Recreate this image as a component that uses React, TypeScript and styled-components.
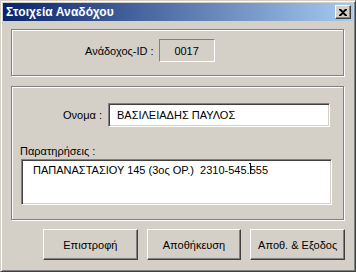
import React from "react";
import styled, { createGlobalStyle } from "styled-components";

const GlobalStyle = createGlobalStyle`
  body {
    margin: 0;
    background: #d4d0c8;
    font-family: "Liberation Sans", Arial, sans-serif;
    font-size: 11px;
    color: #000;
  }
`;

const Window = styled.div`
  width: 356px;
  height: 272px;
  box-sizing: border-box;
  background: #d4d0c8;
  border: 1px solid;
  border-color: #d4d0c8 #404040 #404040 #d4d0c8;
  box-shadow: inset 1px 1px #fff, inset -1px -1px #808080;
  padding: 2px;
  display: flex;
  flex-direction: column;
`;

const TitleBar = styled.div`
  height: 18px;
  flex: none;
  background: linear-gradient(to right, #0a246a, #a6caf0);
  display: flex;
  align-items: center;
  justify-content: space-between;
  padding: 0 2px 0 3px;
`;

const Title = styled.span`
  color: #fff;
  font-weight: bold;
  font-size: 12px;
  letter-spacing: 0.1px;
`;

const CloseButton = styled.div`
  width: 16px;
  height: 14px;
  box-sizing: border-box;
  background: #d4d0c8;
  border: 1px solid;
  border-color: #fff #404040 #404040 #fff;
  box-shadow: inset -1px -1px #808080;
  display: flex;
  align-items: center;
  justify-content: center;
`;

const Body = styled.div`
  flex: 1;
  display: flex;
  flex-direction: column;
  padding: 8px 8px 0 8px;
`;

const Group = styled.div<{ $h: number; $mt: number }>`
  height: ${(p) => p.$h}px;
  margin-top: ${(p) => p.$mt}px;
  width: 333px;
  box-sizing: border-box;
  border: 1px solid #808080;
  box-shadow: inset 1px 1px #fff, 1px 1px #fff;
  position: relative;
`;

const IdRow = styled.div`
  display: flex;
  align-items: center;
  padding: 9px 0 0 73px;
  gap: 5px;
`;

const Label = styled.span`
  white-space: nowrap;
`;

const IdBox = styled.div`
  width: 56px;
  height: 23px;
  box-sizing: border-box;
  border: 1px solid;
  border-color: #808080 #fff #fff #808080;
  display: flex;
  align-items: center;
  justify-content: center;
`;

const NameRow = styled.div`
  display: flex;
  align-items: center;
  padding: 16px 0 0 51px;
  gap: 6px;
`;

const Field = styled.div<{ $w: number; $h: number }>`
  width: ${(p) => p.$w}px;
  height: ${(p) => p.$h}px;
  box-sizing: border-box;
  background: #fff;
  border: 1px solid;
  border-color: #808080 #fff #fff #808080;
  box-shadow: inset 1px 1px #404040, inset -1px -1px #d4d0c8;
  padding: 0 8px;
  white-space: pre;
`;

const NameField = styled(Field)`
  display: flex;
  align-items: center;
`;

const NotesField = styled(Field)`
  padding-top: 4px;
  padding-left: 11px;
  position: relative;
`;

const NotesLabel = styled.div`
  padding: 17px 0 0 8px;
  height: 14px;
  line-height: 14px;
`;

const NotesWrap = styled.div`
  padding: 1px 0 0 9px;
`;

const Caret = styled.span`
  position: absolute;
  left: 228px;
  top: 3px;
  width: 2px;
  height: 11px;
  border-left: 1px solid #000;
  &::before {
    content: "";
    position: absolute;
    left: -2px;
    top: 0;
    width: 2px;
    height: 1px;
    background: #000;
  }
`;

const Buttons = styled.div`
  display: flex;
  gap: 9px;
  margin-top: 9px;
  padding-left: 32px;
`;

const Button = styled.div`
  width: 95px;
  height: 31px;
  box-sizing: border-box;
  background: #d4d0c8;
  border: 1px solid;
  border-color: #fff #404040 #404040 #fff;
  box-shadow: inset -1px -1px #808080;
  display: flex;
  align-items: center;
  justify-content: center;
`;

export default function App() {
  return (
    <>
      <GlobalStyle />
      <Window>
        <TitleBar>
          <Title>Στοιχεία Αναδόχου</Title>
          <CloseButton>
            <svg width="8" height="7" viewBox="0 0 8 7">
              <path
                d="M0 0h2l2 2 2-2h2v1L5 3.5 8 6v1H6L4 5 2 7H0V6l3-2.5L0 1z"
                fill="#000"
              />
            </svg>
          </CloseButton>
        </TitleBar>
        <Body>
          <Group $h={47} $mt={0}>
            <IdRow>
              <Label>Ανάδοχος-ID :</Label>
              <IdBox>0017</IdBox>
            </IdRow>
          </Group>
          <Group $h={134} $mt={10}>
            <NameRow>
              <Label>Ονομα :</Label>
              <NameField $w={222} $h={24}>
                ΒΑΣΙΛΕΙΑΔΗΣ ΠΑΥΛΟΣ
              </NameField>
            </NameRow>
            <NotesLabel>Παρατηρήσεις :</NotesLabel>
            <NotesWrap>
              <NotesField $w={311} $h={46}>
                {"ΠΑΠΑΝΑΣΤΑΣΙΟΥ 145 (3ος ΟΡ.)  2310-545.555"}
                <Caret />
              </NotesField>
            </NotesWrap>
          </Group>
          <Buttons>
            <Button>Επιστροφή</Button>
            <Button>Αποθήκευση</Button>
            <Button>Αποθ. &amp; Εξοδος</Button>
          </Buttons>
        </Body>
      </Window>
    </>
  );
}
